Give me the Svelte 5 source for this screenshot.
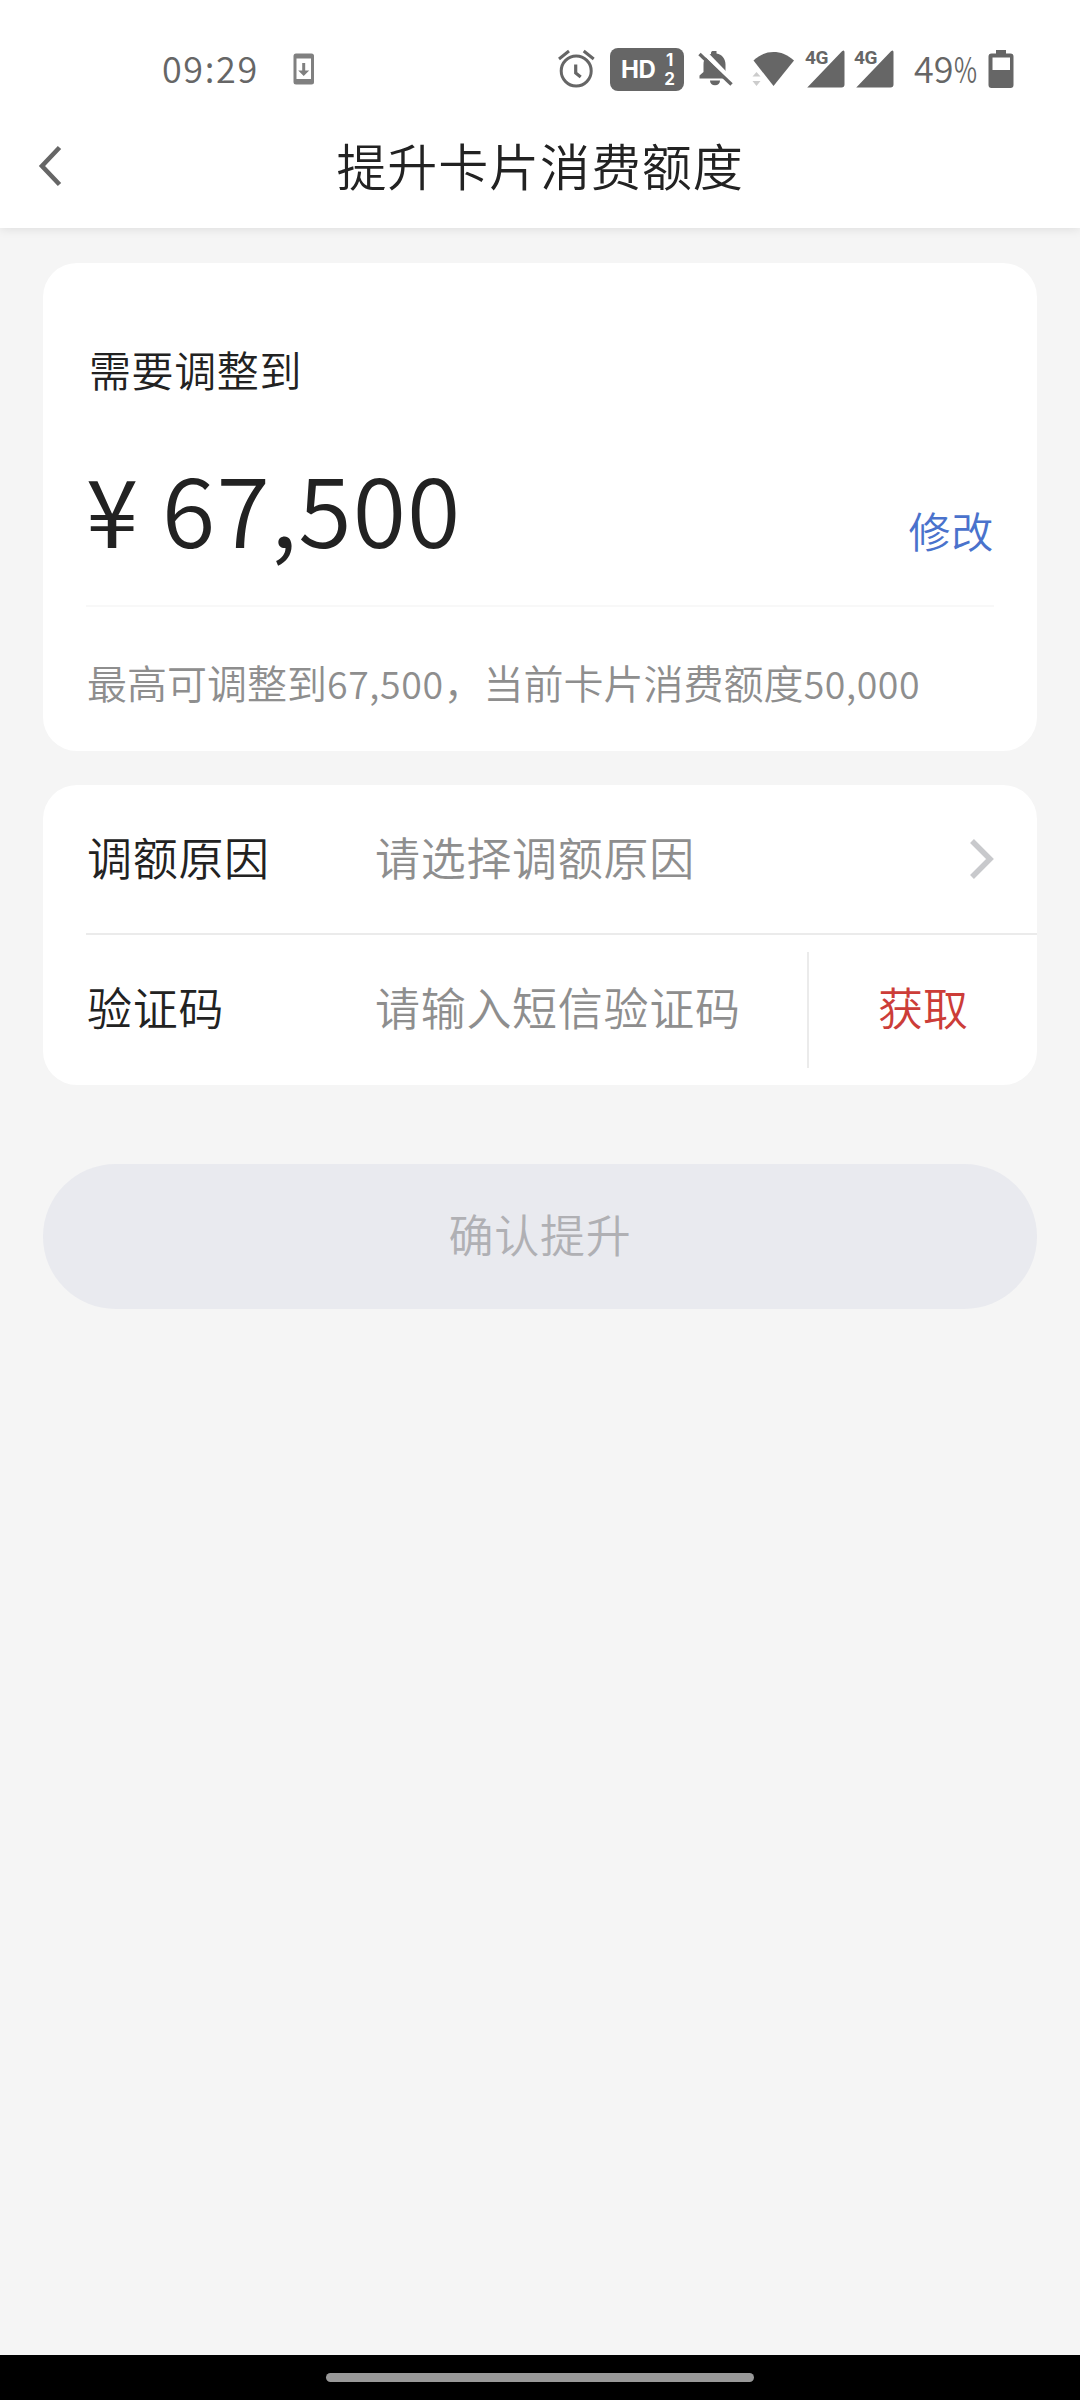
<script lang="ts">
	const current = "50,000";
	const max = "67,500";

	let target = $state(max);
</script>

<div class="screen">
	<div class="status">
		<span class="clock">09:29</span>
		<svg class="update" width="22" height="32" viewBox="0 0 22 32">
			<rect x="0.5" y="0.5" width="20.5" height="31" rx="2.5" fill="#808080" />
			<rect x="3.5" y="5.5" width="14.5" height="20.5" fill="#fff" />
			<path d="M9.2 10h3v7.5h4l-5.5 5.5-5.5-5.5h4z" fill="#808080" />
		</svg>

		<div class="indicators">
			<svg class="alarm" width="38" height="40" viewBox="0 0 38 40">
				<g fill="none" stroke="#666" stroke-width="3">
					<circle cx="18.2" cy="22" r="15" />
					<path d="M1 10 11 2M25.7 2l10 8" />
					<path d="M17.7 15.5v8.5l5 4" stroke-width="3.2" />
				</g>
			</svg>
			<div class="hd">
				<b>HD</b>
				<span class="sims"><i>1</i><i>2</i></span>
			</div>
			<svg class="bell" width="36" height="36" viewBox="0 0 36 36">
				<path
					d="M2.5 28v-3l4-3.5V14C6.5 8 10 4.5 14 3.5V2.600C14 1 15.500 0 17.500 0h2v3c5.500 1 9 5 9 11v7.500l4.500 4V28z"
					transform="translate(-1 -.5)"
					fill="#666"
				/>
				<path d="M12 29.500h10c0 3-2 4.800-5 4.800s-5-1.800-5-4.800z" fill="#666" />
				<path d="M5 0 36 32" stroke="#fff" stroke-width="5" />
				<path d="M1.500 3 33.500 33.500" stroke="#666" stroke-width="3.4" />
			</svg>
			<svg class="wifi" width="44" height="38" viewBox="0 0 44 38">
				<path d="M1.5 10.5C8 4.500 14.500 2 21.500 2S35.500 4.500 42 10.500L21.500 36z" fill="#666" />
				<path d="M.5 26.500 4.500 22l4 4.500zM.5 31h8l-4 5z" fill="#ccc" />
			</svg>
			{#each [1, 2] as sim (sim)}
				<div class="signal">
					<svg width="38" height="38" viewBox="0 0 38 38">
						<path d="M.5 37.300 35 1.300q2.500-2 2.500 1V34.500q0 3-3 3H1q-1.500 0-.5-.2z" fill="#666" />
					</svg>
					<span>4G</span>
				</div>
			{/each}
			<span class="percent">49<span>%</span></span>
			<svg width="26" height="38" viewBox="0 0 26 38">
				<path
					fill-rule="evenodd"
					d="M8 0h10v3.500h4.500q3 0 3 3V35q0 3-3 3h-19q-3 0-3-3V6.500q0-3 3-3H8zM4.500 7.500V20h17.500V7.500z"
					fill="#666"
				/>
			</svg>
		</div>
	</div>

	<header>
		<svg class="back" width="24" height="42" viewBox="0 0 24 42">
			<path d="M21.500 2.500 4 21l17.500 18.500" fill="none" stroke="#666" stroke-width="4.6" />
		</svg>
		<h1>提升卡片消费额度</h1>
	</header>

	<main>
		<section class="card amount">
			<p class="label">需要调整到</p>
			<div class="value">
				<span class="yen">¥</span>
				<span class="number">{target}</span>
				<button class="edit">修改</button>
			</div>
			<p class="hint">最高可调整到<span>{max}</span>，当前卡片消费额度<span>{current}</span></p>
		</section>

		<section class="card form">
			<div class="row">
				<span class="name">调额原因</span>
				<span class="placeholder">请选择调额原因</span>
				<svg class="more" width="26" height="42" viewBox="0 0 26 42">
					<path d="M3 3 21 21 3 39" fill="none" stroke="#c8c9cc" stroke-width="5.5" />
				</svg>
			</div>
			<div class="row">
				<span class="name">验证码</span>
				<span class="placeholder">请输入短信验证码</span>
				<button class="code">获取</button>
			</div>
		</section>

		<button class="submit" disabled>确认提升</button>
	</main>

	<div class="nav"><div class="pill"></div></div>
</div>

<style>
	:global(body) {
		margin: 0;
	}

	.screen {
		width: 1080px;
		height: 2400px;
		display: flex;
		flex-direction: column;
		background: #f5f5f5;
		color: #222;
		font-family: "Noto Sans CJK SC", sans-serif;
		font-weight: 350;
		overflow: hidden;
	}

	p,
	h1 {
		margin: 0;
		font-weight: inherit;
	}

	button {
		padding: 0;
		border: 0;
		background: none;
		font: inherit;
	}

	.status {
		position: relative;
		z-index: 1;
		height: 70px;
		padding: 34px 66px 0 162px;
		display: flex;
		align-items: center;
		background: #fff;
		color: #666;
	}

	.clock,
	.percent {
		padding-bottom: 4px;
		font-size: 36px;
		line-height: 40px;
	}

	.clock {
		width: 131px;
		letter-spacing: 1.6px;
	}

	.indicators {
		margin-left: auto;
		display: flex;
		align-items: center;
	}

	.alarm {
		margin-right: 14px;
	}

	.hd {
		width: 74px;
		height: 43px;
		box-sizing: border-box;
		padding: 0 9px 0 11px;
		display: flex;
		align-items: center;
		justify-content: space-between;
		border-radius: 8px;
		background: #666;
		color: #fff;
		font-family: Inter, sans-serif;
	}

	.hd b {
		font-weight: 700;
		font-size: 24px;
		line-height: 43px;
		letter-spacing: -0.5px;
	}

	.sims {
		display: flex;
		flex-direction: column;
		gap: 1px;
	}

	.sims i {
		font-style: normal;
		font-weight: 700;
		font-size: 17px;
		line-height: 18px;
		text-align: center;
	}

	.bell {
		margin-left: 14px;
	}

	.wifi {
		margin: 0 11px 0 18px;
	}

	.signal {
		position: relative;
		width: 38px;
		height: 38px;
		margin-right: 11px;
	}

	.signal svg {
		display: block;
	}

	.signal span {
		position: absolute;
		left: -2px;
		top: -2px;
		font: 700 19px/20px Roboto, sans-serif;
		letter-spacing: -0.5px;
	}

	.percent {
		width: 63px;
		margin: 0 11px 0 9px;
		white-space: nowrap;
	}

	.percent span {
		display: inline-block;
		transform: scaleX(0.7);
		transform-origin: left;
	}

	header {
		position: relative;
		flex: none;
		height: 124px;
		display: grid;
		grid-template-columns: 100px 1fr 100px;
		align-items: center;
		background: #fff;
		box-shadow: 0 1px 10px rgba(0, 0, 0, 0.1);
	}

	.back {
		margin-left: 38px;
	}

	h1 {
		padding-bottom: 4px;
		font-size: 50px;
		line-height: 60px;
		letter-spacing: 0.9px;
		text-align: center;
	}

	main {
		flex: 1;
		padding: 35px 43px 0;
	}

	.card {
		box-sizing: border-box;
		border-radius: 34px;
		background: #fff;
	}

	.amount {
		height: 488px;
		padding: 76px 43px 0;
	}

	.label {
		padding-left: 3px;
		font-size: 42px;
		line-height: 60px;
		letter-spacing: 0.6px;
	}

	.value {
		height: 206px;
		display: flex;
		align-items: baseline;
		border-bottom: 2px solid #f8f8f8;
		line-height: 214px;
	}

	.yen {
		width: 76px;
		font-size: 94px;
		font-weight: 400;
	}

	.number {
		font-size: 97px;
		letter-spacing: 1.2px;
	}

	.edit {
		margin-left: auto;
		color: #4a72cc;
		font-size: 42px;
		letter-spacing: 0.8px;
	}

	.hint {
		margin-top: 45px;
		padding-left: 1px;
		color: #8e8e8e;
		font-size: 40px;
		line-height: 60px;
	}

	.hint span {
		font-size: 37.5px;
		letter-spacing: 0.6px;
	}

	.form {
		height: 300px;
		margin-top: 34px;
		padding-left: 43px;
	}

	.row {
		height: 148px;
		display: flex;
		align-items: center;
		font-size: 45px;
		letter-spacing: 0.7px;
	}

	.row + .row {
		height: 150px;
		border-top: 2px solid #ebebeb;
	}

	.name {
		width: 289px;
		padding: 0 0 5px 1px;
		box-sizing: border-box;
	}

	.placeholder {
		padding-bottom: 5px;
		color: #8e8e8e;
	}

	.row + .row .name,
	.row + .row .placeholder {
		padding-bottom: 7px;
	}

	.more {
		margin: 0 42px 0 auto;
	}

	.code {
		width: 230px;
		height: 116px;
		margin-left: auto;
		padding: 0 0 7px;
		border-left: 2px solid #ebebeb;
		color: #cc3d38;
	}

	.submit {
		display: block;
		width: 100%;
		height: 145px;
		margin-top: 79px;
		padding-bottom: 7px;
		border-radius: 73px;
		background: #e9eaef;
		color: #b0b0b4;
		font-size: 45px;
		letter-spacing: 0.8px;
	}

	.nav {
		height: 45px;
		display: flex;
		align-items: center;
		justify-content: center;
		background: #000;
	}

	.pill {
		width: 428px;
		height: 9px;
		border-radius: 5px;
		background: #999;
	}
</style>
